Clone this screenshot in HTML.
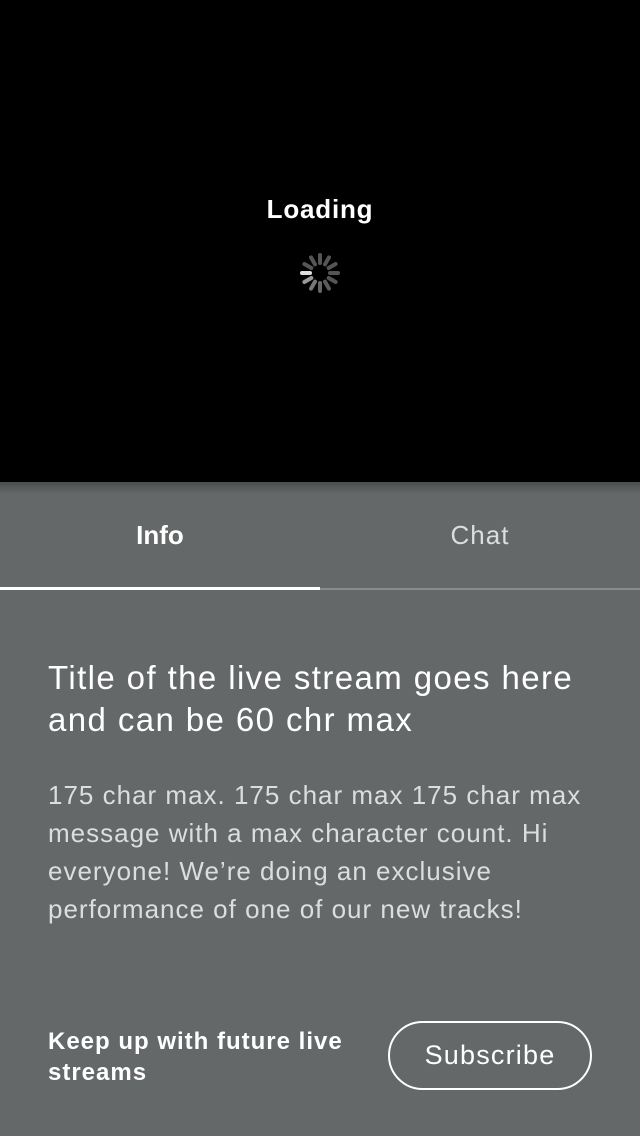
<!DOCTYPE html>
<html><head><meta charset="utf-8"><style>
*{margin:0;padding:0;box-sizing:border-box}
body{width:640px;height:1136px;background:#646868;font-family:"Liberation Sans",sans-serif;color:#fff;position:relative;overflow:hidden}
.video{position:absolute;left:0;top:0;width:640px;height:482px;background:#000}
.shadow{position:absolute;left:0;top:482px;width:640px;height:12px;background:linear-gradient(#4a4d4d,#646868)}
.abs{position:absolute;white-space:nowrap}
</style></head><body>
<div class="video"></div>
<div class="shadow"></div>
<div class="abs" style="left:0;width:640px;text-align:center;top:194px;font-size:26px;font-weight:bold;letter-spacing:0.8px">Loading</div>
<svg class="abs" style="left:296px;top:249px" width="48" height="48" viewBox="-24 -24 48 48">
<g stroke-linecap="round" stroke-width="4">
<line x1="0" y1="-10" x2="0" y2="-18" stroke="#555" transform="rotate(0)"/>
<line x1="0" y1="-10" x2="0" y2="-18" stroke="#555" transform="rotate(30)"/>
<line x1="0" y1="-10" x2="0" y2="-18" stroke="#555" transform="rotate(60)"/>
<line x1="0" y1="-10" x2="0" y2="-18" stroke="#555" transform="rotate(90)"/>
<line x1="0" y1="-10" x2="0" y2="-18" stroke="#555" transform="rotate(120)"/>
<line x1="0" y1="-10" x2="0" y2="-18" stroke="#5c5c5c" transform="rotate(150)"/>
<line x1="0" y1="-10" x2="0" y2="-18" stroke="#666" transform="rotate(180)"/>
<line x1="0" y1="-10" x2="0" y2="-18" stroke="#777" transform="rotate(210)"/>
<line x1="0" y1="-10" x2="0" y2="-18" stroke="#999" transform="rotate(240)"/>
<line x1="0" y1="-10" x2="0" y2="-18" stroke="#ddd" transform="rotate(270)"/>
<line x1="0" y1="-10" x2="0" y2="-18" stroke="#555" transform="rotate(300)"/>
<line x1="0" y1="-10" x2="0" y2="-18" stroke="#555" transform="rotate(330)"/>
</g></svg>
<div class="abs" style="left:0;width:320px;text-align:center;top:520px;font-size:26px;font-weight:bold">Info</div>
<div class="abs" style="left:320px;width:320px;text-align:center;top:520px;font-size:26px;color:#ddd;letter-spacing:1px">Chat</div>
<div class="abs" style="left:0;top:587px;width:320px;height:3px;background:#fff"></div>
<div class="abs" style="left:320px;top:588px;width:320px;height:2px;background:#8a8d8d"></div>
<div class="abs" style="left:48px;top:657px;font-size:33px;letter-spacing:1.4px;line-height:42px;white-space:normal;width:545px">Title of the live stream goes here and can be 60 chr max</div>
<div class="abs" style="left:48px;top:776px;font-size:26px;letter-spacing:1px;line-height:38px;white-space:normal;width:560px;color:#ddd">175 char max. 175 char max 175 char max message with a max character count. Hi everyone! We’re doing an exclusive performance of one of our new tracks!</div>
<div class="abs" style="left:48px;top:1026px;font-size:24px;letter-spacing:1px;line-height:31px;font-weight:bold;white-space:normal;width:320px">Keep up with future live streams</div>
<div class="abs" style="left:388px;top:1021px;width:204px;height:69px;border:2px solid #fff;border-radius:35px;text-align:center;line-height:65px;font-size:27px;letter-spacing:1.2px">Subscribe</div>
</body></html>
